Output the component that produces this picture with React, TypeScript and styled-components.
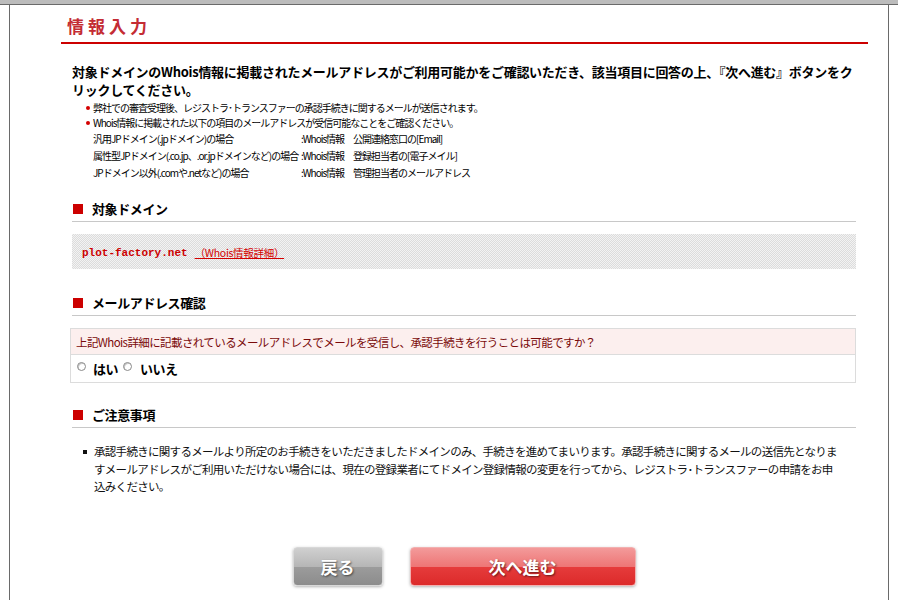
import React from "react";
import styled, { createGlobalStyle } from "styled-components";

const Global = createGlobalStyle`
  html, body { margin: 0; padding: 0; background: #fff; }
  body {
    font-family: "Noto Sans CJK JP", "Noto Sans", sans-serif;
    color: #000;
  }
  * { box-sizing: border-box; }
`;

const Screen = styled.div`
  width: 898px;
  height: 600px;
  overflow: hidden;
  display: flex;
  flex-direction: column;
`;

const TopBar = styled.div`
  flex: none;
  height: 5px;
  background: #bcbcbc;
  border-bottom: 1px solid #6a6a6a;
`;

const Frame = styled.div`
  flex: 1;
  margin-left: 9px;
  width: 880px;
  border-left: 1px solid #6a6a6a;
  border-right: 1px solid #6a6a6a;
  padding: 0 20px 0 51px;
`;

const PageTitle = styled.h1`
  margin: 0;
  padding: 11px 6px 6px;
  border-bottom: 2px solid #cc0000;
  font-size: 17px;
  line-height: 20px;
  font-weight: 700;
  letter-spacing: 4px;
  color: #c42c34;
`;

const Body = styled.div`
  padding: 0 12px 0 11px;
`;

const Intro = styled.p`
  margin: 19px 0 0;
  font-size: 13px;
  line-height: 18px;
  font-weight: 700;
  letter-spacing: -0.28px;
  white-space: nowrap;
`;

const DotList = styled.ul`
  list-style: none;
  margin: 1px 0 0;
  padding: 0 0 0 21px;
`;

const DotItem = styled.li`
  position: relative;
  font-size: 10px;
  line-height: 15px;
  letter-spacing: -1px;
  white-space: nowrap;
  &::before {
    content: "";
    position: absolute;
    left: -7px;
    top: 6px;
    width: 4px;
    height: 4px;
    border-radius: 50%;
    background: #d40000;
  }
`;

const AddrTable = styled.div`
  display: grid;
  grid-template-columns: 208px 1fr;
  padding-left: 21px;
  font-size: 10px;
  line-height: 17px;
  letter-spacing: -1px;
  white-space: nowrap;
`;

const SectionHead = styled.h2<{ $top: number }>`
  margin: ${(p) => p.$top}px 0 0;
  display: flex;
  align-items: center;
  gap: 9px;
  padding: 0 0 2px 1px;
  border-bottom: 1px solid #c8c8c8;
  font-size: 13px;
  line-height: 20px;
  font-weight: 700;
  letter-spacing: -0.4px;
  &::before {
    content: "";
    width: 10px;
    height: 10px;
    background: #cc0000;
  }
`;

const DomainBox = styled.div`
  margin-top: 12px;
  height: 35px;
  display: flex;
  align-items: center;
  gap: 7px;
  padding: 2px 0 0 10px;
  background: repeating-conic-gradient(#dcdcdc 0 25%, #f3f3f3 0 50%) 0 0 / 2px 2px;
`;

const DomainName = styled.span`
  font-family: "Liberation Mono", "DejaVu Sans Mono", monospace;
  font-weight: 700;
  font-size: 11px;
  color: #cc0000;
`;

const WhoisLink = styled.a`
  font-size: 10.5px;
  color: #d40000;
  text-decoration: underline;
  letter-spacing: -0.3px;
`;

const QuestionBox = styled.div`
  margin: 12px 0 0 -2px;
  border: 1px solid #dcdcdc;
`;

const QuestionText = styled.div`
  height: 26px;
  display: flex;
  align-items: center;
  padding-left: 5px;
  background: #fcefee;
  border-bottom: 1px solid #dcdcdc;
  color: #7a0a0a;
  font-size: 11.5px;
  letter-spacing: -0.6px;
`;

const AnswerRow = styled.div`
  height: 27px;
  display: flex;
  align-items: center;
  padding-left: 6px;
`;

const Radio = styled.input`
  appearance: none;
  width: 9px;
  height: 9px;
  margin: -5px 0 0 0;
  border-radius: 50%;
  border: 1px solid #8a8a8a;
  background: #fff;
  box-shadow: inset 1px 1px 0 #c8c8c8;
`;

const AnswerLabel = styled.label<{ $gap: number; $after: number }>`
  margin: 0 ${(p) => p.$after}px 0 ${(p) => p.$gap}px;
  font-size: 13px;
  font-weight: 700;
  letter-spacing: -0.5px;
`;

const NoteList = styled.ul`
  list-style: none;
  margin: 15px 0 0;
  padding: 0 0 0 22px;
`;

const NoteItem = styled.li`
  position: relative;
  font-size: 11.5px;
  line-height: 17.5px;
  letter-spacing: -0.7px;
  color: #111;
  white-space: nowrap;
  &::before {
    content: "";
    position: absolute;
    left: -11px;
    top: 7px;
    width: 4px;
    height: 4px;
    background: #111;
  }
`;

const ButtonRow = styled.div`
  margin-top: 51px;
  display: flex;
  justify-content: center;
  gap: 27px;
`;

const Btn = styled.button<{ $w: number; $red?: boolean }>`
  width: ${(p) => p.$w}px;
  height: 39px;
  border-radius: 4px;
  border: 1px solid ${(p) => (p.$red ? "#f2b0b0" : "#d8d8d8")};
  box-shadow: 0 1px 3px rgba(0, 0, 0, 0.3);
  background: ${(p) =>
    p.$red
      ? "linear-gradient(#f39a9a, #ee7676 50%, #e63c3c 50%, #dc2a2a)"
      : "linear-gradient(#d0d0d0, #b6b6b6 50%, #9c9c9c 50%, #8c8c8c)"};
  color: #fff;
  font-family: "Noto Sans CJK JP", sans-serif;
  font-size: 17px;
  font-weight: 700;
  text-shadow: 1px 1px 2px rgba(0, 0, 0, 0.55);
  cursor: pointer;
  padding: 0;
`;

const addrRows: [string, string][] = [
  ["汎用JPドメイン(.jpドメイン)の場合", ":Whois情報　公開連絡窓口の[Email]"],
  ["属性型JPドメイン(.co.jp、.or.jpドメインなど)の場合", ":Whois情報　登録担当者の[電子メイル]"],
  ["JPドメイン以外(.comや.netなど)の場合", ":Whois情報　管理担当者のメールアドレス"],
];

export default function App() {
  return (
    <>
      <Global />
      <Screen>
        <TopBar />
        <Frame>
          <PageTitle>情報入力</PageTitle>
          <Body>
            <Intro>
              対象ドメインのWhois情報に掲載されたメールアドレスがご利用可能かをご確認いただき、該当項目に回答の上、『次へ進む』ボタンをク
              <br />
              リックしてください。
            </Intro>
            <DotList>
              <DotItem>弊社での審査受理後、レジストラ･トランスファーの承認手続きに関するメールが送信されます。</DotItem>
              <DotItem>Whois情報に掲載された以下の項目のメールアドレスが受信可能なことをご確認ください。</DotItem>
            </DotList>
            <AddrTable>
              {addrRows.map(([a, b]) => (
                <React.Fragment key={a}>
                  <span>{a}</span>
                  <span>{b}</span>
                </React.Fragment>
              ))}
            </AddrTable>

            <SectionHead $top={18}>対象ドメイン</SectionHead>
            <DomainBox>
              <DomainName>plot-factory.net</DomainName>
              <WhoisLink href="#">（Whois情報詳細）</WhoisLink>
            </DomainBox>

            <SectionHead $top={24}>メールアドレス確認</SectionHead>
            <QuestionBox>
              <QuestionText>
                上記Whois詳細に記載されているメールアドレスでメールを受信し、承認手続きを行うことは可能ですか？
              </QuestionText>
              <AnswerRow>
                <Radio type="radio" name="ok" id="yes" />
                <AnswerLabel htmlFor="yes" $gap={7} $after={5}>はい</AnswerLabel>
                <Radio type="radio" name="ok" id="no" />
                <AnswerLabel htmlFor="no" $gap={8} $after={0}>いいえ</AnswerLabel>
              </AnswerRow>
            </QuestionBox>

            <SectionHead $top={22}>ご注意事項</SectionHead>
            <NoteList>
              <NoteItem>
                承認手続きに関するメールより所定のお手続きをいただきましたドメインのみ、手続きを進めてまいります。承認手続きに関するメールの送信先となりま
                <br />
                すメールアドレスがご利用いただけない場合には、現在の登録業者にてドメイン登録情報の変更を行ってから、レジストラ･トランスファーの申請をお申
                <br />
                込みください。
              </NoteItem>
            </NoteList>

            <ButtonRow>
              <Btn $w={90}>戻る</Btn>
              <Btn $w={226} $red>次へ進む</Btn>
            </ButtonRow>
          </Body>
        </Frame>
      </Screen>
    </>
  );
}
